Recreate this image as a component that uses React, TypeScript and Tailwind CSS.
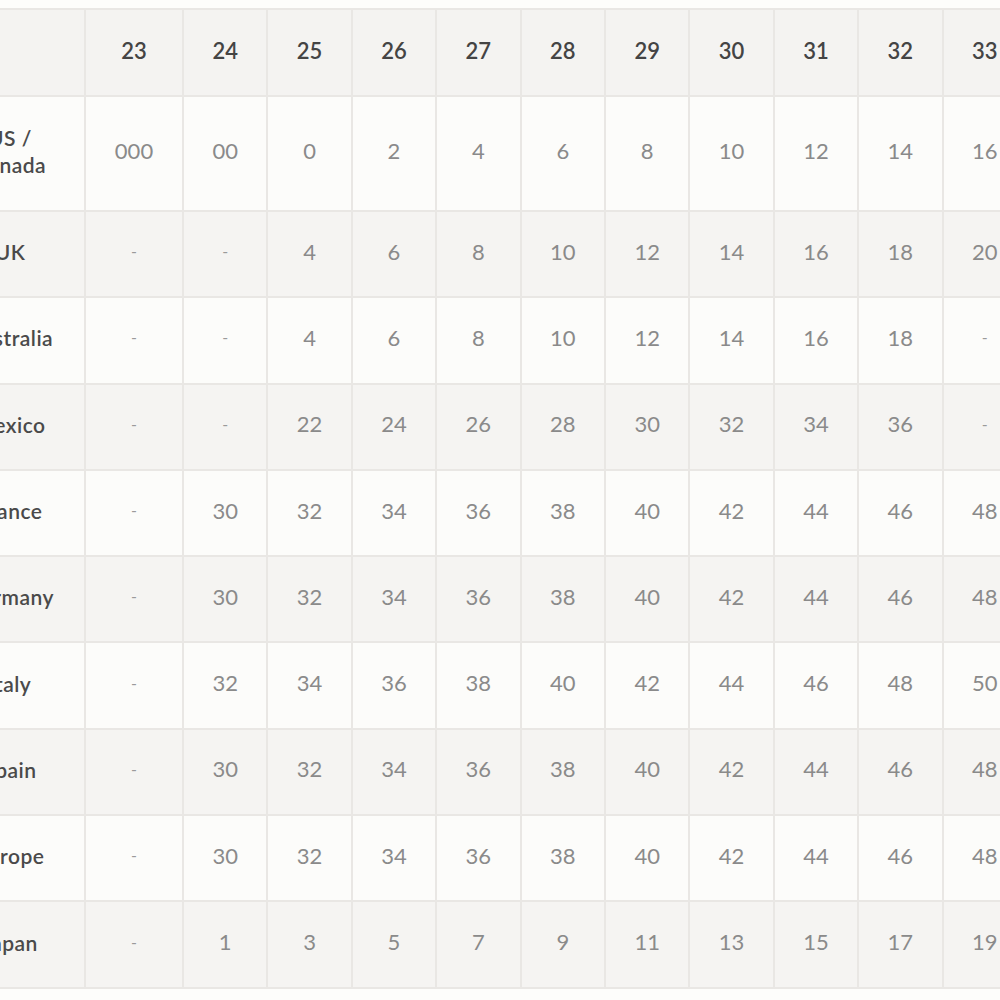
import React from "react";

const sizes = ["23", "24", "25", "26", "27", "28", "29", "30", "31", "32", "33"];

const rows: { label: React.ReactNode; values: string[]; tall?: boolean }[] = [
  { label: <>US /<br />Canada</>, values: ["000", "00", "0", "2", "4", "6", "8", "10", "12", "14", "16"], tall: true },
  { label: "UK", values: ["-", "-", "4", "6", "8", "10", "12", "14", "16", "18", "20"] },
  { label: "Australia", values: ["-", "-", "4", "6", "8", "10", "12", "14", "16", "18", "-"] },
  { label: "Mexico", values: ["-", "-", "22", "24", "26", "28", "30", "32", "34", "36", "-"] },
  { label: "France", values: ["-", "30", "32", "34", "36", "38", "40", "42", "44", "46", "48"] },
  { label: "Germany", values: ["-", "30", "32", "34", "36", "38", "40", "42", "44", "46", "48"] },
  { label: "Italy", values: ["-", "32", "34", "36", "38", "40", "42", "44", "46", "48", "50"] },
  { label: "Spain", values: ["-", "30", "32", "34", "36", "38", "40", "42", "44", "46", "48"] },
  { label: "Europe", values: ["-", "30", "32", "34", "36", "38", "40", "42", "44", "46", "48"] },
  { label: "Japan", values: ["-", "1", "3", "5", "7", "9", "11", "13", "15", "17", "19"] },
];

export default function App() {
  return (
    <div
      className="w-[1000px] h-[1000px] overflow-hidden bg-[#fdfdfb] pt-[8px]"
      style={{ fontFamily: "Lato, 'Open Sans', sans-serif" }}
    >
      <table className="ml-[-66px] table-fixed border-collapse w-[1092px]">
        <colgroup>
          <col className="w-[150px]" />
          <col className="w-[98px]" />
          {sizes.slice(1).map((s) => (
            <col key={s} className="w-[84.4px]" />
          ))}
        </colgroup>
        <thead>
          <tr className="h-[87px] bg-[#f4f3f1]">
            <th className="border-2 border-[#e9e7e4]"></th>
            {sizes.map((s) => (
              <th
                key={s}
                className="border-2 border-[#e9e7e4] pb-[5px] text-center text-[22px] font-semibold text-[#444444]"
              >
                {s}
              </th>
            ))}
          </tr>
        </thead>
        <tbody>
          {rows.map((r, i) => (
            <tr
              key={i}
              className={`${r.tall ? "h-[115px]" : "h-[86.3px]"} ${i % 2 === 0 ? "bg-[#fcfcfa]" : "bg-[#f5f4f2]"}`}
            >
              <td className="border-2 border-[#e9e7e4] pb-[5px] text-center text-[21px] font-semibold leading-[27px] tracking-[0.5px] text-[#4a4a4a]">
                {r.label}
              </td>
              {r.values.map((v, j) => (
                <td
                  key={j}
                  className={`border-2 border-[#e9e7e4] pb-[6px] text-center ${v === "-" ? "text-[16px] text-[#9a9a9a]" : "text-[22px] text-[#8a8a8a]"}`}
                >
                  {v}
                </td>
              ))}
            </tr>
          ))}
        </tbody>
      </table>
    </div>
  );
}
